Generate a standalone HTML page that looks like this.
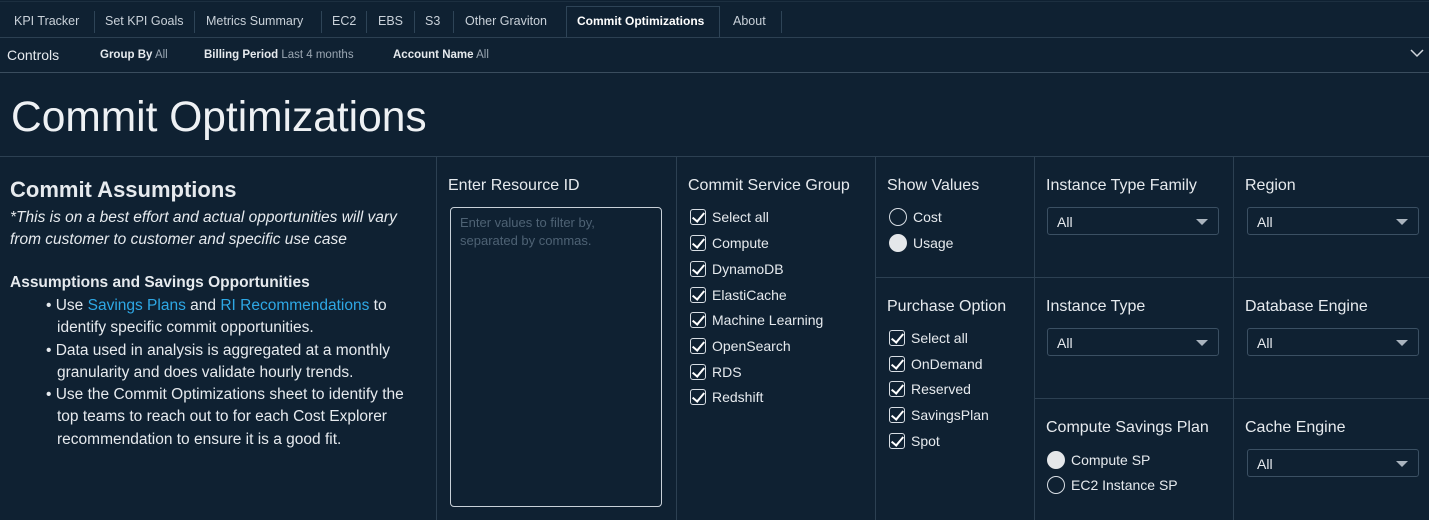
<!DOCTYPE html><html><head><style>
*{margin:0;padding:0;box-sizing:border-box}
body{width:1429px;height:520px;overflow:hidden;background:#0f2132;font-family:"Liberation Sans",sans-serif;color:#e6eaee;position:relative}
.abs{position:absolute}
.tab{position:absolute;top:14px;font-size:12.5px;color:#c9d1d9}
.sep{position:absolute;top:11px;width:1px;height:22px;background:#2e4457}
.hl{position:absolute;height:1px;background:#2c4052}
.vl{position:absolute;width:1px;background:#2c4052}
.h{position:absolute;font-size:16px;color:#e6eaee}
.cb{position:absolute;font-size:14px;color:#e6eaee;display:flex;align-items:center}
.cb i{display:inline-block;width:16px;height:16px;border:1.5px solid #d8dee4;border-radius:3px;margin-right:6px;position:relative}
.cb i:after{content:"";position:absolute;left:4px;top:0px;width:5px;height:10px;border:solid #fff;border-width:0 2px 2px 0;transform:rotate(40deg)}
.rd{position:absolute;font-size:14px;display:flex;align-items:center}
.rd i{display:inline-block;width:18px;height:18px;border:1.5px solid #d8dee4;border-radius:50%;margin-right:6px}
.rd i.on{background:#e4e7ea;border-color:#e4e7ea}
.sel{position:absolute;width:172px;height:28px;border:1px solid #3b5063;border-radius:3px;font-size:14px;padding:6px 9px;color:#e6eaee}
.sel:after{content:"";position:absolute;right:10px;top:11px;border-left:6px solid transparent;border-right:6px solid transparent;border-top:6px solid #aab4be}
a{color:#2ea8e5;text-decoration:none}
</style></head><body>
<div class="hl" style="left:0;right:0;top:1px;background:#1c2f40"></div>
<div class="tab" style="left:14px">KPI Tracker</div><div class="sep" style="left:94px"></div>
<div class="tab" style="left:105px">Set KPI Goals</div><div class="sep" style="left:194px"></div>
<div class="tab" style="left:206px">Metrics Summary</div><div class="sep" style="left:321px"></div>
<div class="tab" style="left:332px">EC2</div><div class="sep" style="left:366px"></div>
<div class="tab" style="left:378px">EBS</div><div class="sep" style="left:414px"></div>
<div class="tab" style="left:425px">S3</div><div class="sep" style="left:453px"></div>
<div class="tab" style="left:465px">Other Graviton</div>
<div class="abs" style="left:566px;top:6px;width:154px;height:32px;border:1px solid #2e4457;border-bottom:none;background:#0f2132"></div>
<div class="tab" style="left:577px;color:#fff;font-weight:bold;font-size:12px">Commit Optimizations</div>
<div class="tab" style="left:733px">About</div><div class="sep" style="left:781px"></div>
<div class="hl" style="left:0;right:0;top:37px"></div>
<div class="abs" style="left:7px;top:47px;font-size:14px">Controls</div>
<div class="abs" style="left:100px;top:49px;font-size:11.5px"><b>Group By</b> <span style="color:#9aa6b2">All</span></div>
<div class="abs" style="left:204px;top:49px;font-size:11.5px"><b>Billing Period</b> <span style="color:#9aa6b2">Last 4 months</span></div>
<div class="abs" style="left:393px;top:49px;font-size:11.5px"><b>Account Name</b> <span style="color:#9aa6b2">All</span></div>
<svg class="abs" style="left:1410px;top:48px" width="14" height="10"><path d="M1 2 L7 8 L13 2" stroke="#d0d6dc" stroke-width="1.5" fill="none"/></svg>
<div class="hl" style="left:0;right:0;top:72px;background:#3a4d5e"></div>
<div class="abs" style="left:11px;top:94px;font-size:42.5px;color:#eef1f4">Commit Optimizations</div>
<div class="hl" style="left:0;right:0;top:156px"></div>
<div class="vl" style="left:436px;top:156px;bottom:0"></div>
<div class="vl" style="left:676px;top:156px;bottom:0"></div>
<div class="vl" style="left:875px;top:156px;bottom:0"></div>
<div class="vl" style="left:1034px;top:156px;bottom:0"></div>
<div class="vl" style="left:1233px;top:156px;bottom:0"></div>
<div class="hl" style="left:875px;right:0;top:277px"></div>
<div class="hl" style="left:1034px;right:0;top:398px"></div>
<div class="abs" style="left:10px;top:177px;font-size:22px;font-weight:bold">Commit Assumptions</div>
<div class="abs" style="left:10px;top:207px;font-size:15.5px;font-style:italic;line-height:22px;width:420px">*This is on a best effort and actual opportunities will vary from customer to customer and specific use case</div>
<div class="abs" style="left:10px;top:274px;font-size:15.5px;font-weight:bold">Assumptions and Savings Opportunities</div>
<div class="abs" style="left:40px;top:295px;font-size:15.5px;line-height:22.3px;width:382px">
<div style="padding-left:17px;text-indent:-11px">• Use <a>Savings Plans</a> and <a>RI Recommendations</a> to identify specific commit opportunities.</div>
<div style="padding-left:17px;text-indent:-11px">• Data used in analysis is aggregated at a monthly granularity and does validate hourly trends.</div>
<div style="padding-left:17px;text-indent:-11px">• Use the Commit Optimizations sheet to identify the top teams to reach out to for each Cost Explorer recommendation to ensure it is a good fit.</div>
</div>
<div class="h" style="left:448px;top:177px">Enter Resource ID</div>
<div class="abs" style="left:450px;top:207px;width:212px;height:300px;border:1px solid #c8d0d8;border-radius:4px;padding:6px 9px;font-size:13px;color:#4e6274;line-height:18px">Enter values to filter by, separated by commas.</div>
<div class="h" style="left:688px;top:177px">Commit Service Group</div>
<div class="cb" style="left:690px;top:209px"><i></i>Select all</div>
<div class="cb" style="left:690px;top:235px"><i></i>Compute</div>
<div class="cb" style="left:690px;top:261px"><i></i>DynamoDB</div>
<div class="cb" style="left:690px;top:287px"><i></i>ElastiCache</div>
<div class="cb" style="left:690px;top:312px"><i></i>Machine Learning</div>
<div class="cb" style="left:690px;top:338px"><i></i>OpenSearch</div>
<div class="cb" style="left:690px;top:364px"><i></i>RDS</div>
<div class="cb" style="left:690px;top:389px"><i></i>Redshift</div>
<div class="h" style="left:887px;top:177px">Show Values</div>
<div class="rd" style="left:889px;top:208px"><i></i>Cost</div>
<div class="rd" style="left:889px;top:234px"><i class="on"></i>Usage</div>
<div class="h" style="left:887px;top:298px">Purchase Option</div>
<div class="cb" style="left:889px;top:330px"><i></i>Select all</div>
<div class="cb" style="left:889px;top:356px"><i></i>OnDemand</div>
<div class="cb" style="left:889px;top:381px"><i></i>Reserved</div>
<div class="cb" style="left:889px;top:407px"><i></i>SavingsPlan</div>
<div class="cb" style="left:889px;top:433px"><i></i>Spot</div>
<div class="h" style="left:1046px;top:177px">Instance Type Family</div>
<div class="sel" style="left:1047px;top:207px">All</div>
<div class="h" style="left:1046px;top:298px">Instance Type</div>
<div class="sel" style="left:1047px;top:328px">All</div>
<div class="h" style="left:1046px;top:419px">Compute Savings Plan</div>
<div class="rd" style="left:1047px;top:451px"><i class="on"></i>Compute SP</div>
<div class="rd" style="left:1047px;top:476px"><i></i>EC2 Instance SP</div>
<div class="h" style="left:1245px;top:177px">Region</div>
<div class="sel" style="left:1247px;top:207px">All</div>
<div class="h" style="left:1245px;top:298px">Database Engine</div>
<div class="sel" style="left:1247px;top:328px">All</div>
<div class="h" style="left:1245px;top:419px">Cache Engine</div>
<div class="sel" style="left:1247px;top:449px">All</div>
</body></html>
